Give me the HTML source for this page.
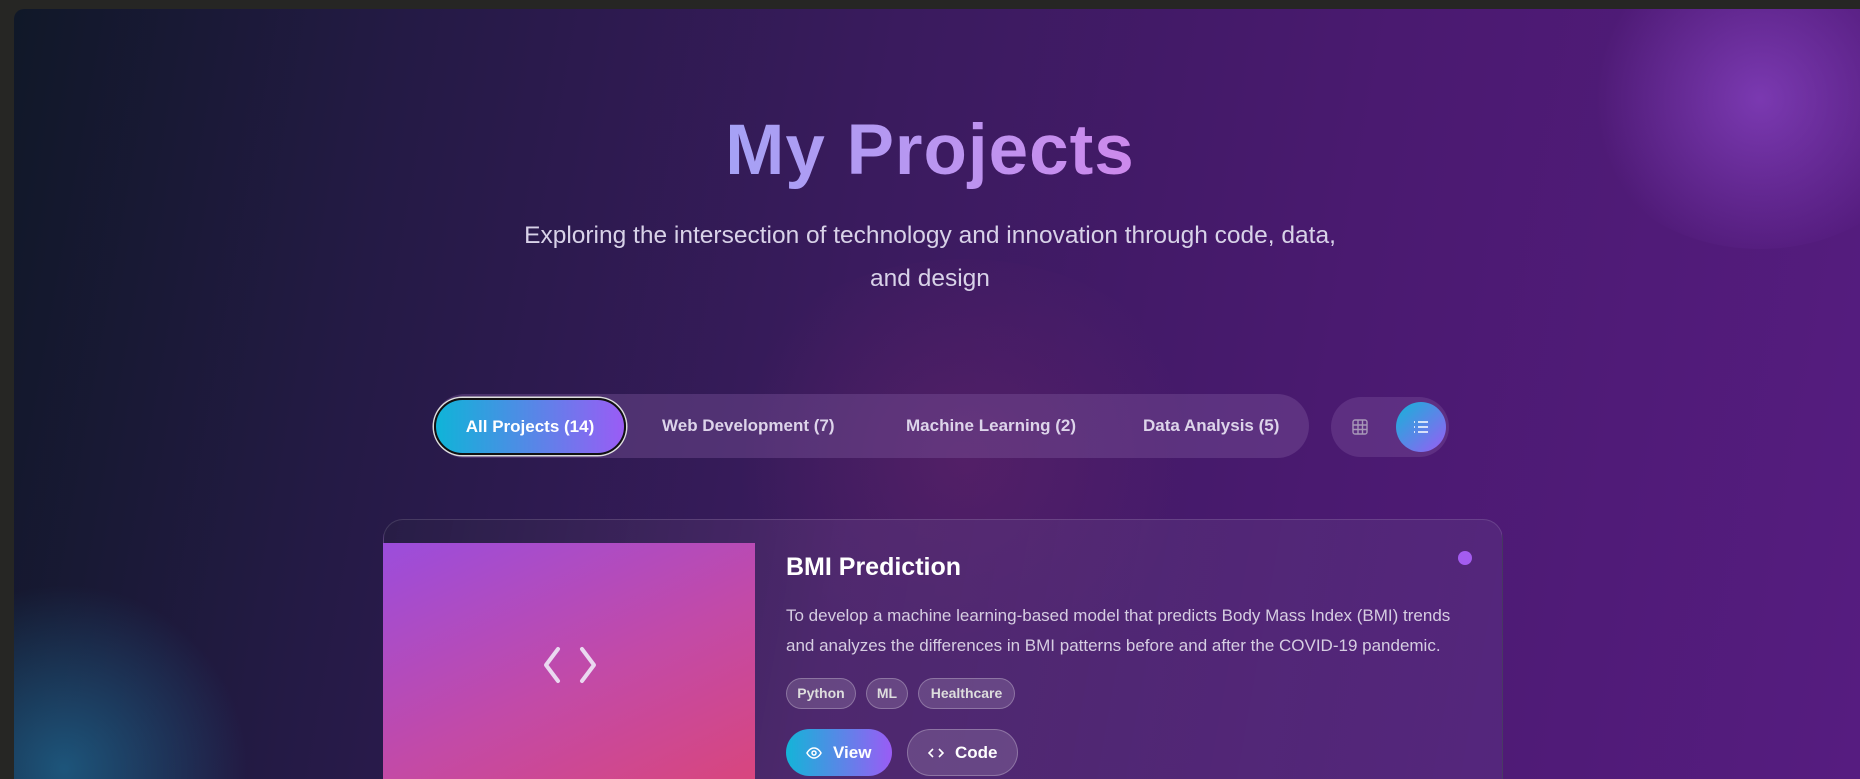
<!DOCTYPE html>
<html><head><meta charset="utf-8"><style>
*{margin:0;padding:0;box-sizing:border-box}
html,body{width:1860px;height:779px;overflow:hidden;background:#262624;font-family:"Liberation Sans","DejaVu Sans",sans-serif;position:relative}
.win{position:absolute;left:14px;top:9px;width:1846px;height:770px;border-radius:10px 0 0 0;overflow:hidden;
background:linear-gradient(100deg,#101828 0%,#241a45 20%,#3a1b5e 45%,#4a1a70 70%,#561c80 100%)}
.glow1{position:absolute;right:-80px;top:-60px;width:360px;height:300px;border-radius:50%;background:radial-gradient(circle,rgba(140,70,200,.7),rgba(140,70,200,0) 70%)}
.glow2{position:absolute;left:-150px;top:560px;width:400px;height:400px;border-radius:50%;background:radial-gradient(circle,rgba(30,100,140,.8),rgba(30,100,140,0) 65%)}
.glow3{position:absolute;left:700px;top:250px;width:500px;height:400px;border-radius:50%;background:radial-gradient(circle,rgba(120,40,110,.35),rgba(120,40,110,0) 70%)}
h1{position:absolute;left:0;width:1860px;top:110px;text-align:center;font-size:71px;font-weight:bold;
background:linear-gradient(90deg,#9ea6f7 35%,#d485ea 65%);-webkit-background-clip:text;color:transparent;letter-spacing:1px}
.sub{position:absolute;left:505px;width:850px;top:214px;text-align:center;color:#d8d2e8;font-size:24.5px;line-height:43px}
.bar{position:absolute;left:433px;top:394px;width:876px;height:64px;border-radius:32px;background:rgba(130,90,160,.38)}
.tab{position:absolute;top:0;height:64px;line-height:64px;color:#ddd4ea;font-size:17px;font-weight:bold}
.act{position:absolute;left:1px;top:4px;width:192px;height:57px;border-radius:29px;background:linear-gradient(90deg,#0fb4d8,#9a5cf5);border:2px solid #111;box-shadow:0 0 0 1.5px #ddd;color:#fff;font-size:17px;font-weight:bold;text-align:center;line-height:53px}
.tog{position:absolute;left:1331px;top:397px;width:118px;height:60px;border-radius:30px;background:rgba(130,90,160,.35)}
.lb{position:absolute;left:1396px;top:402px;width:50px;height:50px;border-radius:50%;background:linear-gradient(135deg,#14b4d8,#9a5cf5)}
.card{position:absolute;left:383px;top:519px;width:1120px;height:260px;border-radius:20px 20px 0 0;border:1px solid rgba(255,255,255,.12);border-bottom:none;
background:linear-gradient(100deg,rgba(40,30,70,.9),rgba(90,50,120,.6) 40%,rgba(90,50,130,.5))}
.img{position:absolute;left:383px;top:543px;width:372px;height:236px;background:linear-gradient(155deg,#9b4ddc,#c24aa8 55%,#d8467e)}
.t{position:absolute;left:786px;top:553px;color:#fff;font-size:25px;font-weight:bold}
.d{position:absolute;left:786px;top:601px;width:680px;color:#d6cde2;font-size:17px;line-height:30px}
.tag{position:absolute;top:678px;height:31px;line-height:29px;border-radius:16px;border:1px solid rgba(255,255,255,.25);background:rgba(255,255,255,.14);color:#ddd;font-size:14px;font-weight:bold;text-align:center}
.btn{position:absolute;top:729px;height:47px;border-radius:24px;color:#fff;font-size:17px;font-weight:bold;line-height:47px}
</style></head><body>
<div class="win">
<div class="glow1"></div><div class="glow2"></div><div class="glow3"></div>
</div>
<h1>My Projects</h1>
<div class="sub">Exploring the intersection of technology and innovation through code, data, and design</div>
<div class="bar">
<div class="act">All Projects (14)</div>
<div class="tab" style="left:229px">Web Development (7)</div>
<div class="tab" style="left:473px">Machine Learning (2)</div>
<div class="tab" style="left:710px">Data Analysis (5)</div>
</div>
<div class="tog"></div>
<svg style="position:absolute;left:1351px;top:418px" width="18" height="18" viewBox="0 0 18 18" fill="none" stroke="#a898b8" stroke-width="1.4"><rect x="2" y="2" width="14" height="14" rx="2"/><path d="M2 7h14M2 11.5h14M7 2v14M11.5 2v14"/></svg>
<div class="lb"></div>
<svg style="position:absolute;left:1412px;top:418px" width="18" height="18" viewBox="0 0 18 18" fill="none" stroke="#fff" stroke-width="1.6"><path d="M6 4h10M6 9h10M6 14h10M2 4h1M2 9h1M2 14h1"/></svg>
<div class="card"></div>
<div class="img"></div>
<svg style="position:absolute;left:540px;top:640px" width="60" height="50" viewBox="0 0 60 50" fill="none" stroke="#ead8f0" stroke-width="4" stroke-linecap="round" stroke-linejoin="round"><path d="M18 9L6 25l12 16M42 9l12 16-12 16"/></svg>
<div style="position:absolute;left:1458px;top:551px;width:14px;height:14px;border-radius:50%;background:#a45cf0"></div>
<div class="t">BMI Prediction</div>
<div class="d">To develop a machine learning-based model that predicts Body Mass Index (BMI) trends and analyzes the differences in BMI patterns before and after the COVID-19 pandemic.</div>
<div class="tag" style="left:786px;width:70px">Python</div>
<div class="tag" style="left:866px;width:42px">ML</div>
<div class="tag" style="left:918px;width:97px">Healthcare</div>
<div class="btn" style="left:786px;width:106px;background:linear-gradient(90deg,#14b4d8,#9a5cf5)"><svg style="position:absolute;left:20px;top:16px" width="16" height="16" viewBox="0 0 16 16" fill="none" stroke="#fff" stroke-width="1.5"><path d="M1 8s2.5-5 7-5 7 5 7 5-2.5 5-7 5-7-5-7-5z"/><circle cx="8" cy="8" r="2"/></svg><span style="position:absolute;left:47px">View</span></div>
<div class="btn" style="left:907px;width:111px;background:rgba(255,255,255,.14);border:1px solid rgba(255,255,255,.25)"><svg style="position:absolute;left:20px;top:15px" width="16" height="16" viewBox="0 0 16 16" fill="none" stroke="#fff" stroke-width="1.6"><path d="M5 4L1 8l4 4M11 4l4 4-4 4"/></svg><span style="position:absolute;left:47px;top:-1px">Code</span></div>
</body></html>
